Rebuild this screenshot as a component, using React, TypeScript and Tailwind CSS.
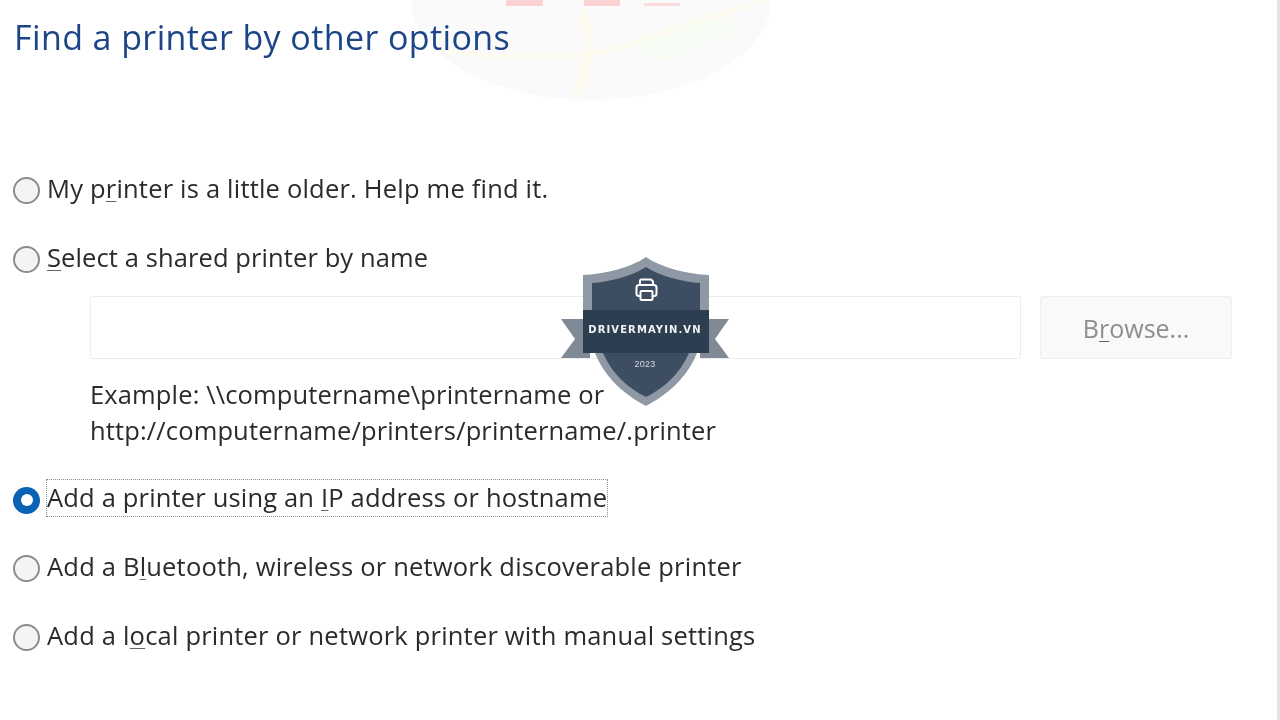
const font = "font-['Open_Sans','Noto_Sans',sans-serif]";

function Radio({ checked = false }: { checked?: boolean }) {
  return checked ? (
    <span className="flex h-[27px] w-[27px] shrink-0 items-center justify-center rounded-full bg-[#0a62b4]">
      <span className="h-[12px] w-[12px] rounded-full bg-white" />
    </span>
  ) : (
    <span className="h-[27px] w-[27px] shrink-0 rounded-full border-2 border-[#8c8c8c] bg-[#f4f4f4]" />
  );
}

function Key({ children }: { children: string }) {
  return <span className="underline decoration-[#666666] decoration-1 underline-offset-[3px]">{children}</span>;
}

function Row({ children, checked, className = "" }: { children: React.ReactNode; checked?: boolean; className?: string }) {
  return (
    <div className={`flex h-[40px] items-center gap-[7px] text-[25.5px] tracking-[0.2px] text-[#2b2b2b] ${className}`}>
      <Radio checked={checked} />
      {children}
    </div>
  );
}

function Backdrop() {
  return (
    <div className="absolute left-[411px] top-[-100px] h-[200px] w-[360px] overflow-hidden rounded-[50%] bg-[#fafafa]">
      <svg viewBox="0 0 360 200" className="h-full w-full" fill="none">
        <path d="M215 142 L 300 112 L 335 128 L 250 162 Z" fill="#f6fbf4" />
        <path d="M32 150 C 90 160 170 160 220 145 C 270 125 320 110 355 100" stroke="#fdfaf0" strokeWidth="5" />
        <path d="M170 110 C 185 140 175 170 165 198" stroke="#fdfaf0" strokeWidth="9" />
      </svg>
      <div className="absolute left-[95px] top-[100px] h-[6px] w-[37px] bg-[#fcd2d2]" />
      <div className="absolute left-[173px] top-[100px] h-[6px] w-[36px] bg-[#fcd2d2]" />
      <div className="absolute left-[233px] top-[103px] h-[3px] w-[36px] bg-[#fcdcdc]" />
    </div>
  );
}

function Badge() {
  return (
    <div className="absolute left-[560px] top-[256px] h-[152px] w-[170px] blur-[0.3px]">
      <svg viewBox="560 256 170 152" className="absolute inset-0 h-full w-full">
        <path d="M561 319 H590 V358 H561 L575 339 Z" fill="#7f8a96" />
        <path d="M729 319 H700 V358 H729 L715 339 Z" fill="#7f8a96" />
        <path d="M646 257 C 630 268 605 274 583 275 V 353 H 595 C 605 378 625 395 646 406 C 667 395 687 378 697 353 H 709 V 275 C 687 274 662 268 646 257 Z" fill="#8e99a5" />
        <path d="M646 267 C 632 276 610 282 592 283 V 353 H 603 C 612 374 628 388 646 397 C 664 388 680 374 689 353 H 700 V 283 C 682 282 660 276 646 267 Z" fill="#3e4e62" />
        <rect x="583" y="310" width="126" height="43" fill="#2c3e50" />
        <g fill="none" stroke="#ffffff" strokeWidth="2" strokeLinejoin="round">
          <path d="M640 285 V 281 Q 640 279.500 641.500 279.500 H 651 L 653 281.500 V 285" />
          <path d="M640.500 296 H 639 Q 636.500 296 636.500 293.500 V 287.500 Q 636.500 285 639 285 H 654 Q 656.500 285 656.500 287.500 V 293.500 Q 656.500 296 654 296 H 652.500" />
          <rect x="640.500" y="291" width="12" height="9" rx="1" />
        </g>
      </svg>
      <span className="absolute left-0 top-[66px] w-full whitespace-nowrap text-center font-['DejaVu_Sans',sans-serif] text-[10px] font-bold leading-[16px] tracking-[1.1px] text-[#f1f3f5]">
        DRIVERMAYIN.VN
      </span>
      <span className="absolute left-0 top-[102px] w-full text-center font-['Liberation_Sans',sans-serif] text-[9px] leading-[12px] tracking-[0.2px] text-[#d5dade]">
        2023
      </span>
    </div>
  );
}

export default function App() {
  return (
    <div className={`relative h-[720px] w-[1280px] overflow-hidden bg-white ${font}`}>
      <Backdrop />
      <div className="relative flex h-full flex-col pl-[13px] pr-[48px] blur-[0.4px]">
        <h1 className="ml-[1px] mt-[14px] h-[46px] text-[34px] font-normal leading-[46px] tracking-[0.4px] text-[#1c4587]">
          Find a printer by other options
        </h1>
        <Row className="mt-[110px]">
          <span className="pb-[3px]">My p<Key>r</Key>inter is a little older. Help me find it.</span>
        </Row>
        <Row className="mt-[29px]">
          <span className="pb-[4px] tracking-[0.1px]"><Key>S</Key>elect a shared printer by name</span>
        </Row>
        <div className="ml-[77px] mt-[17px] flex gap-[19px]">
          <div className="h-[63px] w-[932px] rounded-[2px] border border-[#ececec] bg-white" />
          <div className="flex h-[63px] w-[192px] items-center justify-center rounded-[3px] border border-[#eeeeee] bg-[#f9f9f9] pt-[3px] text-[25px] text-[#8e8e8e]">
            <span>B<Key>r</Key>owse...</span>
          </div>
        </div>
        <div className="ml-[77px] mt-[17px] text-[25.5px] leading-[36px] tracking-[0.14px] text-[#2b2b2b]">
          <div>Example: \\computername\printername or</div>
          <div>http://computername/printers/printername/.printer</div>
        </div>
        <Row checked className="mt-[32px]">
          <span className="flex h-[38px] -translate-x-px -translate-y-[2px] items-center border border-dotted border-[#8a8a8a] pb-[1px] leading-none tracking-[0.17px]">
            <span>Add a printer using an <Key>I</Key>P address or hostname</span>
          </span>
        </Row>
        <Row className="mt-[28px]">
          <span className="pb-[4px]">Add a B<Key>l</Key>uetooth, wireless or network discoverable printer</span>
        </Row>
        <Row className="mt-[29px]">
          <span className="pb-[4px]">Add a l<Key>o</Key>cal printer or network printer with manual settings</span>
        </Row>
      </div>
      <div className="absolute right-0 top-0 h-full w-[3px] bg-[#e4e4e4]" />
      <Badge />
    </div>
  );
}
